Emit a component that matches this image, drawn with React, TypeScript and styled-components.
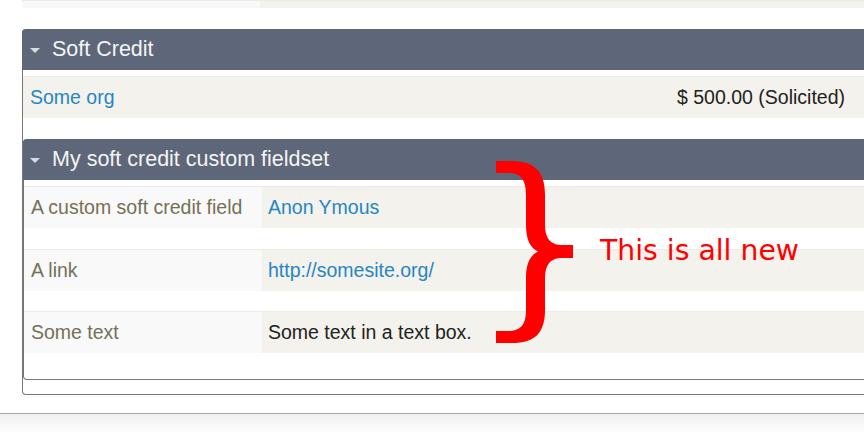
import styled, { createGlobalStyle } from "styled-components";

const GlobalStyle = createGlobalStyle`
  html, body {
    margin: 0;
    padding: 0;
    background: #fff;
    overflow: hidden;
  }
  body {
    font-family: "Liberation Sans", Arial, sans-serif;
    color: #222;
  }
`;

const Page = styled.div`
  position: relative;
  width: 900px;
  height: 440px;
`;

const Content = styled.div`
  padding-left: 22px;
`;

const Row = styled.div<{ $h?: number }>`
  display: flex;
  height: ${(p) => p.$h ?? 42}px;
  border-top: 1px solid #ebebeb;
  box-sizing: border-box;
`;

const LabelCell = styled.div<{ $w?: number }>`
  flex: 0 0 ${(p) => p.$w ?? 238}px;
  background: #f9f9f9;
  color: #747058;
  display: flex;
  align-items: center;
  padding-left: 7px;
  box-sizing: border-box;
`;

const ValueCell = styled.div<{ $link?: boolean }>`
  flex: 1;
  background: #f3f2ec;
  color: ${(p) => (p.$link ? "#2786c2" : "#222")};
  display: flex;
  align-items: center;
  padding-left: 6px;
`;

const Accordion = styled.div<{ $mt: number; $pb: number }>`
  margin-top: ${(p) => p.$mt}px;
  border: 1px solid #777;
  border-top: 0;
  border-radius: 4px;
  padding-bottom: ${(p) => p.$pb}px;
  font-size: 19.5px;
`;

const Header = styled.div<{ $pl: number }>`
  margin: 0 -1px;
  height: 41px;
  background: #5d6779;
  border-radius: 4px 4px 0 0;
  color: #f4f4f4;
  font-size: 21.5px;
  display: flex;
  align-items: center;
  gap: 12px;
  padding-left: ${(p) => p.$pl}px;
`;

const Caret = styled.span`
  width: 0;
  height: 0;
  border-left: 5px solid transparent;
  border-right: 5px solid transparent;
  border-top: 5px solid #d8dbe0;
  margin-top: 2px;
`;

const AccordionBody = styled.div<{ $gap: number }>`
  display: flex;
  flex-direction: column;
  gap: ${(p) => p.$gap}px;
  padding-top: 6px;
`;

const SoftRow = styled(Row)`
  background: #f3f2ec;
  align-items: center;
  justify-content: space-between;
  padding: 0 54px 0 7px;
`;

const OrgLink = styled.span`
  color: #2786c2;
`;

const Footer = styled.div`
  margin-top: 18px;
  height: 20px;
  border-top: 1px solid #aaa;
  background: linear-gradient(#efefef, #fff);
`;

const Note = styled.div`
  position: absolute;
  left: 600px;
  top: 237px;
  font-family: "DejaVu Sans", sans-serif;
  font-size: 28.3px;
  line-height: 28px;
  color: #ff0000;
  white-space: nowrap;
`;

const Brace = styled.svg`
  position: absolute;
  left: 490px;
  top: 155px;
`;

const fields = [
  { label: "A custom soft credit field", value: "Anon Ymous", link: true },
  { label: "A link", value: "http://somesite.org/", link: true },
  { label: "Some text", value: "Some text in a text box.", link: false },
];

export default function App() {
  return (
    <Page>
      <GlobalStyle />
      <Content>
        <Row $h={8}>
          <LabelCell />
          <ValueCell />
        </Row>

        <Accordion $mt={21} $pb={14}>
          <Header $pl={8}>
            <Caret />
            Soft Credit
          </Header>
          <AccordionBody $gap={21}>
            <SoftRow $h={42}>
              <OrgLink>Some org</OrgLink>
              <span>$ 500.00 (Solicited)</span>
            </SoftRow>

            <Accordion $mt={0} $pb={26}>
              <Header $pl={7}>
                <Caret />
                My soft credit custom fieldset
              </Header>
              <AccordionBody $gap={20.5}>
                {fields.map((f) => (
                  <Row key={f.label}>
                    <LabelCell>{f.label}</LabelCell>
                    <ValueCell $link={f.link}>{f.value}</ValueCell>
                  </Row>
                ))}
              </AccordionBody>
            </Accordion>
          </AccordionBody>
        </Accordion>
      </Content>
      <Footer />

      <Brace width="90" height="195" viewBox="490 155 90 195">
        <path
          fill="#ff0000"
          d="M496,161 L512,161 C535,161 545,172 545,195 L545,225 C545,238 550,244 560,245 L573,245 L573,258 L560,258 C550,259 545,265 545,278 L545,310 C545,333 535,343 512,343 L496,343 L496,331 L508,331 C522,331 526,323 526,310 L526,278 C526,262 531,255 538,251.5 C531,248 526,241 526,225 L526,195 C526,181 522,173 508,173 L496,173 Z"
        />
      </Brace>
      <Note>This is all new</Note>
    </Page>
  );
}
